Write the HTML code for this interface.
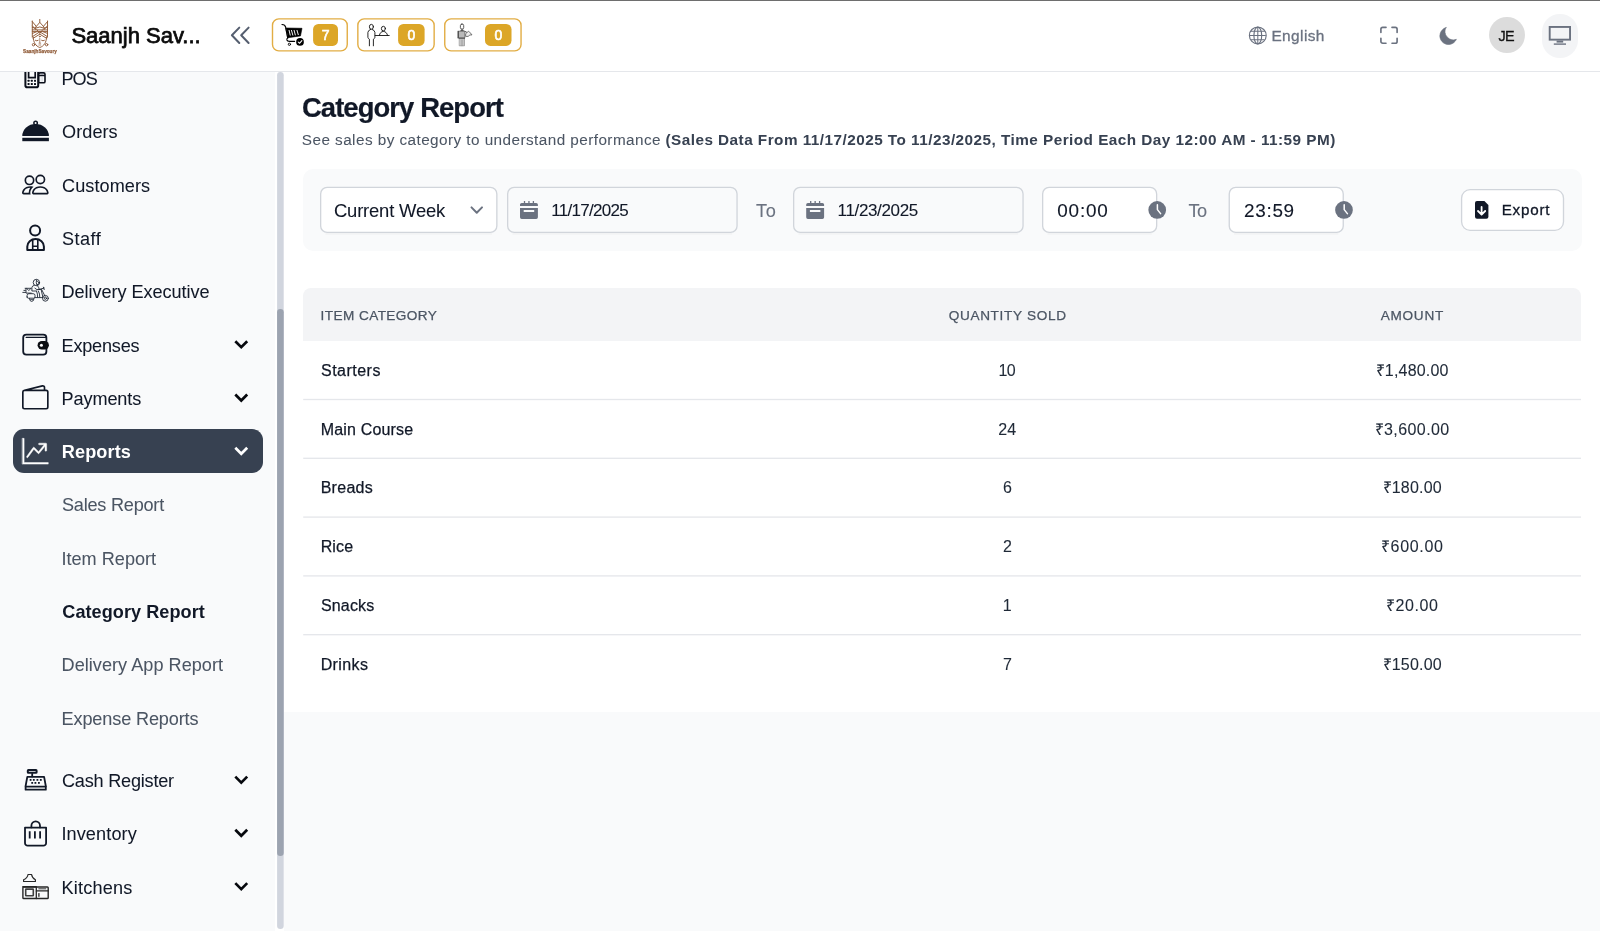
<!DOCTYPE html>
<html lang="en">
<head>
<meta charset="utf-8">
<title>Category Report - Saanjh Savoury</title>
<style>
*{box-sizing:border-box;margin:0;padding:0}
html,body{width:1600px;height:931px;overflow:hidden;background:#fff}
body{font-family:"Liberation Sans",sans-serif;color:#111827;position:relative}
#root{position:absolute;left:0;top:0;width:1600px;height:931px;will-change:transform}
.abs{position:absolute}
.t{position:absolute;white-space:nowrap;line-height:1}
svg{position:absolute;left:0;top:0;overflow:visible}
#sidebar{left:0;top:72px;width:275px;height:859px;background:#f9fafb}
#mainbg{left:284px;top:712px;width:1316px;height:219px;background:#f9fafb}
#active{left:13px;top:429px;width:250px;height:44px;background:#374151;border-radius:11px}
#header{left:0;top:0;width:1600px;height:71px;background:#fff}
#topline{left:0;top:0;width:1600px;height:1px;background:#6e6e6e}
#hborder{left:0;top:71px;width:1600px;height:1px;background:#e5e7eb}
#filter{left:302.5px;top:169px;width:1279.5px;height:81.7px;background:#f9fafb;border-radius:10px}
#thead{left:303px;top:287.8px;width:1278px;height:53px;background:#f3f4f6;border-radius:8px 8px 0 0}
</style>
</head>
<body>
<div id="root">
<div class="abs" id="sidebar"></div>
<div class="abs" id="mainbg"></div>
<div class="abs" id="active"></div>

<!-- sidebar icons -->
<svg width="284" height="931" viewBox="0 0 284 931" fill="none" stroke-linecap="round" stroke-linejoin="round">
<rect x="277.1" y="72" width="6.6" height="857" rx="3.3" fill="#d1d5de"/>
<rect x="277.1" y="309" width="6.6" height="547" rx="3.3" fill="#9ca3b0"/>
<!-- POS -->
<g stroke="#0b0f1a">
<rect x="25.4" y="64" width="12.8" height="23.2" rx="1.8" stroke-width="2"/>
<path d="M28.6 64V77.7H35.2V64" stroke-width="1.7" stroke-linejoin="miter"/>
<rect x="38.6" y="72.9" width="6.4" height="9.9" rx="1.4" stroke-width="1.6"/>
<path d="M38.6 75.5H45" stroke-width="1.5" stroke-linecap="butt"/>
<path d="M40.4 73.9H43.4" stroke-width="0.9" stroke="#6b7280" stroke-linecap="butt"/>
<path d="M41.2 77V81.4M42.6 77V81.4" stroke-width="0.5" stroke="#c4c8d0"/>
</g>
<g fill="#0b0f1a">
<rect x="27.55" y="79.85" width="2" height="2" rx="0.5"/><rect x="30.8" y="79.85" width="2" height="2" rx="0.5"/><rect x="34" y="79.85" width="2" height="2" rx="0.5"/>
<rect x="27.55" y="83.1" width="2" height="2" rx="0.5"/><rect x="30.8" y="83.1" width="2" height="2" rx="0.5"/><rect x="34" y="83.1" width="2" height="2" rx="0.5"/>
</g>
<!-- Orders cloche -->
<path d="M22.3 135.9A13.3 11.9 0 0 1 48.9 135.9Z" fill="#111827"/>
<circle cx="35.6" cy="122.9" r="1.75" stroke="#111827" stroke-width="1.5"/>
<rect x="22.3" y="137.8" width="26.6" height="3.4" fill="#111827"/>
<!-- Customers (people) -->
<g transform="translate(22 171.2) scale(1.6667)" fill="#111827">
<path d="M15 14s1 0 1-1-1-4-5-4-5 3-5 4 1 1 1 1zm-7.978-1L7 12.996c.001-.264.167-1.03.76-1.72C8.312 10.629 9.282 10 11 10c1.717 0 2.687.63 3.24 1.276.593.69.758 1.457.76 1.72l-.008.002-.014.002zM11 7a2 2 0 1 0 0-4 2 2 0 0 0 0 4m3-2a3 3 0 1 1-6 0 3 3 0 0 1 6 0M6.936 9.28a6 6 0 0 0-1.23-.247A7 7 0 0 0 5 9c-4 0-5 3-5 4q0 1 1 1h4.216A2.24 2.24 0 0 1 5 13c0-1.01.377-2.042 1.09-2.904.243-.294.526-.569.846-.816M4.92 10A5.5 5.5 0 0 0 4 13H1c0-.26.164-1.03.76-1.724.545-.636 1.492-1.256 3.16-1.275ZM1.5 5.5a3 3 0 1 1 6 0 3 3 0 0 1-6 0m3-2a2 2 0 1 0 0 4 2 2 0 0 0 0-4"/>
</g>
<!-- Staff -->
<g stroke="#111827">
<circle cx="35.1" cy="230.4" r="5" stroke-width="2"/>
<path d="M27.3 249.9v-3.4a8.3 7.5 0 0 1 16.6 0v3.4z" stroke-width="2"/>
<path d="M32.7 240V249.5M37.8 240V249.5M32.7 246.2H37.8" stroke-width="1.6"/>
</g>
<!-- Delivery executive -->
<g stroke="#1b2331" stroke-width="0.88">
<circle cx="36.4" cy="282.5" r="3.2"/>
<path d="M36.6 279.9Q35.6 282.4 36.9 284.9M36.9 284.9L39.4 283.4L37.6 281.4"/>
<path d="M34.2 285.3Q32 285.8 31.9 287.6V291H36.4"/>
<path d="M37.4 285.6Q38.9 287.2 39.3 289.3"/>
<path d="M34.9 288.2L36.9 289.6L41.2 289.3"/>
<path d="M39.2 289.5L44.2 288M43.4 287.2L44.2 289.6"/>
<path d="M36.6 291.2Q37.8 294 37.6 297.2M38.4 291Q40 294 39.8 297.2"/>
<path d="M41.2 289.8Q42.2 294.4 42.9 297.4"/>
<path d="M41.7 289.6L45 296.2"/>
<path d="M35 297.6H42.8"/>
<path d="M25.1 288.3H31.2M26 288.5V293.1H31.2M27 288.8L28.8 290.5L30.6 288.8"/>
<path d="M22.8 292.4H25.6M23.9 290.4H25.4"/>
<path d="M27.1 297V295.4Q27.1 293.7 28.9 293.7H33.2Q35 293.7 35 295.4V297Q35 298.2 33.8 298.2H28.3Q27.1 298.2 27.1 297Z"/>
<path d="M29.4 298.6Q29.6 301.4 31.7 301.4Q33.8 301.4 34 298.6"/>
<path d="M30.6 299.6H32.8" stroke-width="0.8"/>
<circle cx="45.4" cy="298.3" r="2.9"/>
<circle cx="45.4" cy="298.3" r="1.1"/>
</g>
<!-- Expenses wallet -->
<g>
<rect x="23.2" y="334.6" width="23.2" height="20" rx="3.2" stroke="#111827" stroke-width="1.8"/>
<path d="M26.2 337.4H45.4" stroke="#111827" stroke-width="1.3"/>
<rect x="37.6" y="341" width="11.3" height="8.4" rx="4.2" fill="#0b0d12"/>
<circle cx="41.4" cy="345.2" r="1.55" fill="#fff"/>
</g>
<!-- Payments wallet2 -->
<g transform="translate(22 384.55) scale(1.6667)" fill="#111827">
<path d="M12.136.326A1.5 1.5 0 0 1 14 1.78V3h.5A1.5 1.5 0 0 1 16 4.5v9a1.5 1.5 0 0 1-1.5 1.5h-13A1.5 1.5 0 0 1 0 13.5v-9a1.5 1.5 0 0 1 1.432-1.499zM5.562 3H13V1.78a.5.5 0 0 0-.621-.484zM1.5 4a.5.5 0 0 0-.5.5v9a.5.5 0 0 0 .5.5h13a.5.5 0 0 0 .5-.5v-9a.5.5 0 0 0-.5-.5z"/>
</g>
<!-- Reports graph-up-arrow -->
<g transform="translate(22.5 438.35) scale(1.61)" fill="#fff" stroke="#fff" stroke-width="0.28">
<path fill-rule="evenodd" d="M0 0h1v15h15v1H0zm10 3.5a.5.5 0 0 1 .5-.5h4a.5.5 0 0 1 .5.5v4a.5.5 0 0 1-1 0V4.9l-3.613 4.417a.5.5 0 0 1-.74.037L7.06 6.767l-3.656 5.027a.5.5 0 0 1-.808-.588l4-5.5a.5.5 0 0 1 .758-.06l2.609 2.61L13.445 4H10.5a.5.5 0 0 1-.5-.5"/>
</g>
<!-- Cash register -->
<g stroke="#111827">
<rect x="27.8" y="770.1" width="8.8" height="2.7" rx="0.6" stroke-width="2"/>
<path d="M32.2 773.8V776.4" stroke-width="1.8"/>
<path d="M27.3 776.8H44.1L45.8 786V789.7H25.6V786Z" stroke-width="1.8"/>
<path d="M25.6 786.6H45.8" stroke-width="1.6"/>
</g>
<g fill="#111827">
<rect x="29.7" y="779" width="1.8" height="1.8"/><rect x="32.9" y="779" width="1.8" height="1.8"/><rect x="36.5" y="779" width="1.8" height="1.8"/><rect x="39.9" y="779" width="1.8" height="1.8"/>
<rect x="31.3" y="782" width="1.8" height="1.8"/><rect x="34.5" y="782" width="1.8" height="1.8"/><rect x="38" y="782" width="1.8" height="1.8"/>
</g>
<!-- Inventory bag -->
<g stroke="#111827" stroke-width="1.8">
<path d="M25 827.6H46.1V843a2.7 2.7 0 0 1-2.7 2.7H27.7a2.7 2.7 0 0 1-2.7-2.7Z"/>
<path d="M31.4 827.4V825.8a4.3 4.5 0 0 1 8.6 0V827.4"/>
<path d="M29.7 831.2V838.4M34.9 831.2V838.4M40.1 831.2V838.4" stroke-linecap="butt"/>
</g>
<!-- Kitchens -->
<g stroke="#262626">
<path d="M28 874.5H31.6Q32 878 35.4 879.8V881.5H23.6V879.8Q27.6 878 28 874.5Z" stroke-width="1.2"/>
<rect x="22.9" y="887" width="25.3" height="11.5" rx="0.8" stroke-width="1.4"/>
<path d="M22.9 886.8H36" stroke-width="1.5"/>
<path d="M36.3 887V898.5" stroke-width="1.3"/>
<rect x="25.7" y="889.1" width="7.6" height="6.6" rx="0.4" stroke-width="1.6" stroke="#3f3f3f"/>
<path d="M36.3 890.9H48.2" stroke-width="1.2"/>
<path d="M38.8 888.8H45.8" stroke-width="0.9"/>
<path d="M38.9 893.6V896.3" stroke-width="1.3"/>
</g>
<!-- chevrons -->
<g stroke="#06080d" stroke-width="2.7" stroke-linecap="butt" stroke-linejoin="miter">
<path d="M235.3 341.20L241.25 347.20L247.2 341.20"/>
<path d="M235.3 394.50L241.25 400.50L247.2 394.50"/>
<path d="M235.3 776.60L241.25 782.60L247.2 776.60"/>
<path d="M235.3 829.80L241.25 835.80L247.2 829.80"/>
<path d="M235.3 883.10L241.25 889.10L247.2 883.10"/>
</g>
<g stroke="#fff" stroke-width="2.7" stroke-linecap="butt" stroke-linejoin="miter"><path d="M235.3 447.80L241.25 453.80L247.2 447.80"/></g>

</svg>
<div class="t" style="left:61.59px;top:70px;font-size:18.1px;color:#111827;letter-spacing:-1.034px;-webkit-text-stroke:0.05px #111827;">POS</div>
<div class="t" style="left:62.00px;top:123px;font-size:18.1px;color:#111827;letter-spacing:0.071px;-webkit-text-stroke:0.05px #111827;">Orders</div>
<div class="t" style="left:62.00px;top:177px;font-size:18.1px;color:#111827;letter-spacing:0.075px;-webkit-text-stroke:0.05px #111827;">Customers</div>
<div class="t" style="left:61.95px;top:230px;font-size:18.1px;color:#111827;letter-spacing:0.472px;-webkit-text-stroke:0.05px #111827;">Staff</div>
<div class="t" style="left:61.59px;top:283px;font-size:18.1px;color:#111827;letter-spacing:-0.049px;-webkit-text-stroke:0.05px #111827;">Delivery Executive</div>
<div class="t" style="left:61.59px;top:337px;font-size:18.1px;color:#111827;letter-spacing:-0.213px;-webkit-text-stroke:0.05px #111827;">Expenses</div>
<div class="t" style="left:61.59px;top:390px;font-size:18.1px;color:#111827;letter-spacing:-0.106px;-webkit-text-stroke:0.05px #111827;">Payments</div>
<div class="t" style="left:61.86px;top:443px;font-size:18.1px;color:#fff;font-weight:700;letter-spacing:0.100px;">Reports</div>
<div class="t" style="left:61.95px;top:496px;font-size:18.1px;color:#4b5563;letter-spacing:-0.211px;-webkit-text-stroke:0.05px #4b5563;">Sales Report</div>
<div class="t" style="left:61.39px;top:550px;font-size:18.1px;color:#4b5563;letter-spacing:0.024px;-webkit-text-stroke:0.05px #4b5563;">Item Report</div>
<div class="t" style="left:62.27px;top:603px;font-size:18.1px;color:#111827;font-weight:700;letter-spacing:0.053px;">Category Report</div>
<div class="t" style="left:61.59px;top:656px;font-size:18.1px;color:#4b5563;letter-spacing:0.031px;-webkit-text-stroke:0.05px #4b5563;">Delivery App Report</div>
<div class="t" style="left:61.59px;top:710px;font-size:18.1px;color:#4b5563;letter-spacing:-0.131px;-webkit-text-stroke:0.05px #4b5563;">Expense Reports</div>
<div class="t" style="left:62.00px;top:772px;font-size:18.1px;color:#111827;letter-spacing:-0.211px;-webkit-text-stroke:0.05px #111827;">Cash Register</div>
<div class="t" style="left:61.39px;top:825px;font-size:18.1px;color:#111827;letter-spacing:0.119px;-webkit-text-stroke:0.05px #111827;">Inventory</div>
<div class="t" style="left:61.59px;top:879px;font-size:18.1px;color:#111827;letter-spacing:0.181px;-webkit-text-stroke:0.05px #111827;">Kitchens</div>

<!-- header -->
<div class="abs" id="header"></div>
<div class="abs" id="topline"></div>
<div class="abs" id="hborder"></div>
<div class="abs" style="left:1542.1px;top:13.5px;width:35.6px;height:44px;border-radius:17.8px;background:#f3f4f6"></div>
<div class="abs" style="left:1488.8px;top:17.4px;width:35.8px;height:35.8px;border-radius:50%;background:#dcdcdc"></div>
<svg width="1600" height="72" viewBox="0 0 1600 72" fill="none" stroke-linecap="round" stroke-linejoin="round">
<g stroke="#e2ad44" stroke-width="1.4" fill="#fff">
<rect x="272.5" y="18.85" width="74.75" height="32" rx="6.3"/>
<rect x="357.85" y="18.85" width="76.3" height="32" rx="6.3"/>
<rect x="444.75" y="18.85" width="76.3" height="32" rx="6.3"/>
</g>
<g fill="#dca627">
<rect x="313.1" y="24" width="24.9" height="21.9" rx="5.3"/>
<rect x="398.1" y="24" width="26.5" height="21.9" rx="5.3"/>
<rect x="485" y="24" width="26.5" height="21.9" rx="5.3"/>
</g>
<!-- logo -->
<g stroke="#8f5a37" stroke-width="0.95">
<path d="M39.8 19.4V22.4"/>
<path d="M32.3 21V37.2M47.5 21V37.2"/>
<path d="M32.3 21.6L36.3 26.4L39.8 22.4L43.4 26.4L47.5 21.6"/>
<path d="M35.6 28.1Q39.8 25.6 44.1 28.1"/>
<path d="M36.2 26.4L35.4 28.2M43.5 26.4L44.3 28.2"/>
<path d="M32.3 29.9H47.5M32.3 31.6H47.5"/>
<path d="M32.3 27.4L35.6 28.2M47.5 27.4L44.1 28.2"/>
<path d="M32.5 26L36 29.8M47.3 26L43.8 29.8"/>
<path d="M39.8 31.8L32.5 36.6M39.8 31.8L47.3 36.6"/>
<path d="M39.8 34.2L33 38.4M39.8 34.2L46.8 38.4"/>
<path d="M32.5 33.4L36.4 31.8M47.3 33.4L43.4 31.8"/>
<path d="M37 29.9L39.8 33.4L42.6 29.9"/>
<path d="M33.3 37.2C33.3 42.4 35.8 46.2 39.8 47.5C43.9 46.2 46.5 42.4 46.5 37.2"/>
<circle cx="33.5" cy="44.7" r="1.2"/><circle cx="46.6" cy="44.7" r="1.2"/>
<path d="M35.4 40.4Q36.8 41.4 38.2 40.4M41.6 40.4Q43 41.4 44.4 40.4"/>
<path d="M39.8 38.4V42.6M39 43.2H40.7M38.9 45H40.8" stroke-width="0.7"/>
<circle cx="39.8" cy="36.6" r="0.4"/>
</g>
<text x="23.1" y="52.6" font-family="Liberation Sans, sans-serif" font-size="5.9" font-weight="700" fill="#8f5a37" stroke="#8f5a37" stroke-width="0.25" textLength="33.8" lengthAdjust="spacingAndGlyphs">SaanjhSavoury</text>
<!-- collapse -->
<g stroke="#555e6f" stroke-width="2">
<path d="M239.3 27.6L231.9 35.3L239.3 43"/>
<path d="M248.6 27.6L241.2 35.3L248.6 43"/>
</g>
<!-- cart -->
<g stroke="#000" stroke-width="1.15">
<path d="M282 24.5Q285 24.7 285.6 27L287.7 37.6"/>
<path d="M288 37.7Q286.5 38.4 286.9 40Q287.3 41.4 289.6 41.4H294.6"/>
<circle cx="289.4" cy="44.3" r="1.15" stroke-width="0.9"/>
</g>
<path d="M286 28L302 28.3L300.5 35.9L288 37.7Z" fill="#000" stroke="#000" stroke-width="0.6"/>
<g stroke="#fff" stroke-width="0.95" stroke-linecap="butt">
<path d="M289 30L290.3 35.5M291.4 30L292.9 35.5M294 30L295.4 35.3M296.9 30L298.4 35"/>
</g>
<circle cx="300" cy="41.9" r="3.85" fill="#000"/>
<path d="M298.2 42L299.5 43.3L301.9 40.6" stroke="#fff" stroke-width="1.05"/>
<!-- waiter + customer -->
<g stroke="#111" stroke-width="0.9">
<ellipse cx="371.4" cy="26.8" rx="2" ry="2.45"/>
<path d="M370.6 29.4Q368 30.4 367.9 32.4V37.4Q368 38.4 369.4 39.2V45.8"/>
<path d="M372.2 29.4Q374.8 30.4 374.9 32.4V37.4Q374.8 38.4 373.4 39.2V45.8"/>
<path d="M375.2 35.5H389.2"/>
<ellipse cx="383.4" cy="28.6" rx="2" ry="2.3"/>
<path d="M379.4 35.3C379.8 33 381.2 31.6 383.4 31.4C385.6 31.6 387 33 387.5 35.3"/>
</g>
<!-- waiter gray -->
<g>
<rect x="460.4" y="24.1" width="3.3" height="5" rx="1.5" fill="#fff" stroke="#3d3d3d" stroke-width="0.85"/>
<path d="M460.2 31.2L461.4 29.4H462.8L464 31.2Z" fill="#555" stroke="#555" stroke-width="0.4"/>
<rect x="458.1" y="31.2" width="6.7" height="6.9" fill="#b9b9b9" stroke="#5a5a5a" stroke-width="0.7"/>
<path d="M458.5 31.4V37.8" stroke="#4a4a4a" stroke-width="0.9"/>
<rect x="459.6" y="38.2" width="4.9" height="7.6" fill="#c4c4c4" stroke="#808080" stroke-width="0.6"/>
<path d="M462 40V45.8" stroke="#8a8a8a" stroke-width="0.6"/>
<path d="M459.4 38.2H464.6" stroke="#444" stroke-width="0.9"/>
<path d="M465 31.4L466.6 32.2" stroke="#444" stroke-width="0.9"/>
<path d="M466 33.4L468.6 31.2L470.4 33L472 34.9L469.6 35L468.4 36.4H466Z" fill="#ededed" stroke="#555" stroke-width="0.8"/>
</g>
<!-- globe -->
<g stroke="#6b7280" stroke-width="1.15">
<circle cx="1257.8" cy="35.45" r="8.4"/>
<ellipse cx="1257.8" cy="35.45" rx="3.9" ry="8.4"/>
<path d="M1257.8 27.4V43.5M1249.8 35.45H1265.8M1250.9 31.2H1264.7M1250.9 39.7H1264.7" stroke-width="1.05" stroke-linecap="butt"/>
</g>
<!-- fullscreen -->
<g stroke="#6b7280" stroke-width="1.65">
<path d="M1380.9 32.4V29.2a1.8 1.8 0 0 1 1.8-1.8H1386"/>
<path d="M1392 27.4H1395.3a1.8 1.8 0 0 1 1.8 1.8V32.4"/>
<path d="M1397.1 38.2V41.4a1.8 1.8 0 0 1-1.8 1.8H1392"/>
<path d="M1386 43.2H1382.7a1.8 1.8 0 0 1-1.8-1.8V38.2"/>
</g>
<!-- moon -->
<path d="M1446 27.55A8.65 8.65 0 1 0 1456.4 39.3A8.4 8.4 0 0 1 1446 27.55Z" fill="#6b7280" stroke="#6b7280" stroke-width="0.6"/>
<!-- monitor -->
<g stroke="#6b7280">
<rect x="1549.7" y="26.95" width="20.35" height="12.7" stroke-width="1.9" stroke-linejoin="miter"/>
<path d="M1556.6 41.6H1563.2" stroke-width="2" stroke-linecap="butt"/>
<path d="M1553.8 44.1H1566" stroke-width="1.4" stroke-linecap="butt"/>
</g>

</svg>
<div class="t" style="left:71.38px;top:25px;font-size:22px;color:#0b0b0b;letter-spacing:0.002px;-webkit-text-stroke:0.75px #0b0b0b;">Saanjh Sav...</div>
<div class="t" style="left:1271.43px;top:28px;font-size:15.4px;color:#6b7280;letter-spacing:0.419px;-webkit-text-stroke:0.3px #6b7280;">English</div>
<div class="t" style="left:1498.53px;top:29px;font-size:14.4px;color:#111;letter-spacing:-0.653px;-webkit-text-stroke:0.3px #111;">JE</div>
<div class="t" style="left:321.85px;top:28px;font-size:14px;color:#fff;-webkit-text-stroke:0.6px #fff;">7</div>
<div class="t" style="left:407.50px;top:28px;font-size:14px;color:#fff;-webkit-text-stroke:0.6px #fff;">0</div>
<div class="t" style="left:494.40px;top:28px;font-size:14px;color:#fff;-webkit-text-stroke:0.6px #fff;">0</div>

<!-- main -->
<div class="abs" id="filter"></div>
<div class="abs" id="thead"></div>
<svg width="1600" height="931" viewBox="0 0 1600 931" fill="none" stroke-linecap="round" stroke-linejoin="round">
<g fill="#e5e7eb">
<rect x="303.2" y="398.83" width="1277.8" height="1.33"/>
<rect x="303.2" y="457.63" width="1277.8" height="1.33"/>
<rect x="303.2" y="516.43" width="1277.8" height="1.33"/>
<rect x="303.2" y="575.23" width="1277.8" height="1.33"/>
<rect x="303.2" y="634.03" width="1277.8" height="1.33"/>
</g>
<g stroke="#000" stroke-opacity="0.04" stroke-width="1.4" stroke-linecap="round">
<path d="M326 233.9H491.5M513 233.9H731.7M799 233.9H1017.7M1048 233.9H1151.3M1234.6 233.9H1337.9"/>
</g>
<g stroke="#d1d5db" stroke-width="1.33">
<rect x="320.65" y="187.4" width="176.2" height="45" rx="6.5" fill="#fff"/>
<rect x="507.65" y="187.4" width="229.4" height="45" rx="6.5" fill="#f9fafb"/>
<rect x="793.65" y="187.4" width="229.4" height="45" rx="6.5" fill="#f9fafb"/>
<rect x="1042.65" y="187.4" width="114" height="45" rx="6.5" fill="#fff"/>
<rect x="1229.25" y="187.4" width="114" height="45" rx="6.5" fill="#fff"/>
<rect x="1461.6" y="189.65" width="101.9" height="40.7" rx="8.5" fill="#fff"/>
</g>
<!-- select chevron -->
<path d="M471.5 207.4L476.75 212.7L482 207.4" stroke="#6b7280" stroke-width="2"/>
<!-- calendars -->
<g id="cal" fill="#6b7280">
<path d="M520 206.1V204.6a1.7 1.7 0 0 1 1.7-1.7H536.2a1.7 1.7 0 0 1 1.7 1.7V206.1Z"/>
<rect x="523.85" y="201" width="1.3" height="3"/><rect x="528.3" y="201" width="1.3" height="3"/><rect x="532.75" y="201" width="1.3" height="3"/>
<path fill-rule="evenodd" d="M520 208H537.9V217.2a1.7 1.7 0 0 1-1.7 1.7H521.7a1.7 1.7 0 0 1-1.7-1.7ZM523.7 210h10.5v1.9h-10.5z"/>
</g>
<g fill="#6b7280" transform="translate(286.2 0)">
<path d="M520 206.1V204.6a1.7 1.7 0 0 1 1.7-1.7H536.2a1.7 1.7 0 0 1 1.7 1.7V206.1Z"/>
<rect x="523.85" y="201" width="1.3" height="3"/><rect x="528.3" y="201" width="1.3" height="3"/><rect x="532.75" y="201" width="1.3" height="3"/>
<path fill-rule="evenodd" d="M520 208H537.9V217.2a1.7 1.7 0 0 1-1.7 1.7H521.7a1.7 1.7 0 0 1-1.7-1.7ZM523.7 210h10.5v1.9h-10.5z"/>
</g>
<!-- clocks -->
<circle cx="1157.2" cy="209.9" r="8.85" fill="#6b7280"/>
<path d="M1157.4 204.8V209.6L1160.6 213.6" stroke="#fff" stroke-width="1.5"/>
<circle cx="1344" cy="209.9" r="8.85" fill="#6b7280"/>
<path d="M1344.2 204.8V209.6L1347.4 213.6" stroke="#fff" stroke-width="1.5"/>
<!-- export -->
<path d="M1477 200.9H1484.4L1488.4 205V216.8a2 2 0 0 1-2 2H1477a2 2 0 0 1-2-2V202.9a2 2 0 0 1 2-2Z" fill="#111827"/>
<path d="M1481.6 207V214.6M1478 211L1481.6 214.7L1485.2 211" stroke="#fff" stroke-width="1.8"/>

</svg>
<div class="t" style="left:301.94px;top:94px;font-size:27.4px;color:#111827;font-weight:700;letter-spacing:-0.905px;-webkit-text-stroke:0.2px #111827;">Category Report</div>
<div class="t" style="left:301.84px;top:132px;font-size:15.3px;color:#4b5563;letter-spacing:0.442px;-webkit-text-stroke:0.05px #4b5563;">See sales by category to understand performance</div>
<div class="t" style="left:665.48px;top:132px;font-size:15.3px;color:#374151;font-weight:700;letter-spacing:0.472px;">(Sales Data From 11/17/2025 To 11/23/2025, Time Period Each Day 12:00 AM - 11:59 PM)</div>
<div class="t" style="left:334.00px;top:202px;font-size:18.4px;color:#111827;letter-spacing:-0.174px;-webkit-text-stroke:0.08px #111827;">Current Week</div>
<div class="t" style="left:551.29px;top:202px;font-size:17px;color:#111827;letter-spacing:-0.699px;-webkit-text-stroke:0.1px #111827;">11/17/2025</div>
<div class="t" style="left:755.94px;top:202px;font-size:18.2px;color:#6b7280;letter-spacing:0.678px;-webkit-text-stroke:0.1px #6b7280;">To</div>
<div class="t" style="left:837.54px;top:202px;font-size:17px;color:#111827;letter-spacing:-0.338px;-webkit-text-stroke:0.1px #111827;">11/23/2025</div>
<div class="t" style="left:1057.35px;top:202px;font-size:18.9px;color:#111827;letter-spacing:0.767px;-webkit-text-stroke:0.1px #111827;">00:00</div>
<div class="t" style="left:1188.44px;top:202px;font-size:18.2px;color:#6b7280;letter-spacing:-0.572px;-webkit-text-stroke:0.1px #6b7280;">To</div>
<div class="t" style="left:1244.00px;top:202px;font-size:18.9px;color:#111827;letter-spacing:0.707px;-webkit-text-stroke:0.1px #111827;">23:59</div>
<div class="t" style="left:1501.70px;top:202px;font-size:15.2px;color:#111827;letter-spacing:0.780px;-webkit-text-stroke:0.32px #111827;">Export</div>
<div class="t" style="left:320.53px;top:309px;font-size:13.6px;color:#4b5563;letter-spacing:0.429px;-webkit-text-stroke:0.25px #4b5563;">ITEM CATEGORY</div>
<div class="t" style="left:948.64px;top:309px;font-size:13.6px;color:#4b5563;letter-spacing:0.681px;-webkit-text-stroke:0.25px #4b5563;">QUANTITY SOLD</div>
<div class="t" style="left:1380.78px;top:309px;font-size:13.6px;color:#4b5563;letter-spacing:0.710px;-webkit-text-stroke:0.25px #4b5563;">AMOUNT</div>
<div class="t" style="left:321.01px;top:363px;font-size:16px;color:#111827;letter-spacing:0.487px;-webkit-text-stroke:0.25px #111827;">Starters</div>
<div class="t" style="left:998.47px;top:363px;font-size:16px;color:#1f2937;letter-spacing:-0.561px;-webkit-text-stroke:0.1px #1f2937;">10</div>
<div class="t" style="left:1375.71px;top:363px;font-size:16px;color:#1f2937;letter-spacing:0.171px;-webkit-text-stroke:0.1px #1f2937;">₹1,480.00</div>
<div class="t" style="left:320.63px;top:422px;font-size:16px;color:#111827;letter-spacing:0.188px;-webkit-text-stroke:0.25px #111827;">Main Course</div>
<div class="t" style="left:998.28px;top:422px;font-size:16px;color:#1f2937;-webkit-text-stroke:0.1px #1f2937;">24</div>
<div class="t" style="left:1374.51px;top:422px;font-size:16px;color:#1f2937;letter-spacing:0.434px;-webkit-text-stroke:0.1px #1f2937;">₹3,600.00</div>
<div class="t" style="left:320.63px;top:480px;font-size:16px;color:#111827;letter-spacing:0.297px;-webkit-text-stroke:0.25px #111827;">Breads</div>
<div class="t" style="left:1002.91px;top:480px;font-size:16px;color:#1f2937;-webkit-text-stroke:0.1px #1f2937;">6</div>
<div class="t" style="left:1382.51px;top:480px;font-size:16px;color:#1f2937;letter-spacing:0.209px;-webkit-text-stroke:0.1px #1f2937;">₹180.00</div>
<div class="t" style="left:320.63px;top:539px;font-size:16px;color:#111827;letter-spacing:0.164px;-webkit-text-stroke:0.25px #111827;">Rice</div>
<div class="t" style="left:1002.95px;top:539px;font-size:16px;color:#1f2937;-webkit-text-stroke:0.1px #1f2937;">2</div>
<div class="t" style="left:1380.91px;top:539px;font-size:16px;color:#1f2937;letter-spacing:0.692px;-webkit-text-stroke:0.1px #1f2937;">₹600.00</div>
<div class="t" style="left:321.01px;top:598px;font-size:16px;color:#111827;letter-spacing:0.151px;-webkit-text-stroke:0.25px #111827;">Snacks</div>
<div class="t" style="left:1002.72px;top:598px;font-size:16px;color:#1f2937;-webkit-text-stroke:0.1px #1f2937;">1</div>
<div class="t" style="left:1385.81px;top:598px;font-size:16px;color:#1f2937;letter-spacing:0.622px;-webkit-text-stroke:0.1px #1f2937;">₹20.00</div>
<div class="t" style="left:320.63px;top:657px;font-size:16px;color:#111827;letter-spacing:0.416px;-webkit-text-stroke:0.25px #111827;">Drinks</div>
<div class="t" style="left:1002.94px;top:657px;font-size:16px;color:#1f2937;-webkit-text-stroke:0.1px #1f2937;">7</div>
<div class="t" style="left:1382.51px;top:657px;font-size:16px;color:#1f2937;letter-spacing:0.209px;-webkit-text-stroke:0.1px #1f2937;">₹150.00</div>
</div>
</body>
</html>
